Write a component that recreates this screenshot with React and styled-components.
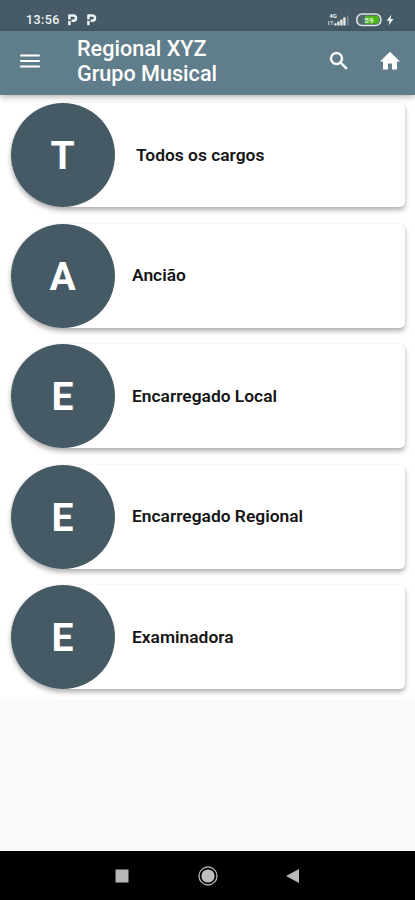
import React from 'react';
import styled, { createGlobalStyle } from 'styled-components';

const GlobalStyle = createGlobalStyle`
  * { box-sizing: border-box; }
  body { margin: 0; font-family: Roboto, sans-serif; background: #fafafa; }
`;

const Screen = styled.div`
  width: 415px;
  height: 900px;
  display: flex;
  flex-direction: column;
  overflow: hidden;
  background: #fafafa;
`;

const StatusBar = styled.div`
  height: 31px;
  flex: none;
  display: flex;
  align-items: center;
  padding: 8px 21px 0 26px;
  background: #465b65;
  color: #f0f5f7;
`;

const Clock = styled.span`
  width: 41px;
  font-size: 12.5px;
  line-height: 14px;
  font-weight: 500;
  letter-spacing: 0.4px;
`;

const StatusIcons = styled.div`
  display: flex;
  align-items: center;
  gap: ${(p) => p.$gap}px;
  margin-left: ${(p) => (p.$end ? 'auto' : 0)};
  svg { display: block; }
`;

const AppBar = styled.header`
  height: 64px;
  flex: none;
  display: flex;
  align-items: center;
  padding: 0 13px 4px 18px;
  background: #607d8b;
  color: #fff;
  position: relative;
  z-index: 1;
  box-shadow: 0 2px 6px rgba(0, 0, 0, 0.3);
`;

const IconButton = styled.button`
  width: 24px;
  height: 24px;
  padding: 0;
  border: 0;
  background: none;
  color: inherit;
  margin-left: ${(p) => p.$space || 0}px;
  svg { display: block; width: 24px; height: 24px; fill: currentColor; }
`;

const Title = styled.h1`
  margin: 0 auto 0 35px;
  font-size: 21.6px;
  line-height: 25.5px;
  font-weight: 500;
  white-space: nowrap;
`;

const List = styled.main`
  display: flex;
  flex-direction: column;
  gap: 16.5px;
  padding: 8px 10px 11px 11px;
  background: #fff;
`;

const Card = styled.article`
  height: 104px;
  flex: none;
  display: flex;
  align-items: center;
  border-radius: 52px 5px 5px 52px;
  background: #fff;
  box-shadow: 0 3px 5px rgba(0, 0, 0, 0.32), 0 0 2px rgba(0, 0, 0, 0.06);
`;

const Avatar = styled.div`
  width: 104px;
  height: 104px;
  flex: none;
  display: flex;
  align-items: center;
  justify-content: center;
  padding: 2px 1px 0 0;
  border-radius: 50%;
  background: #455a64;
  color: #fff;
  font-size: 39px;
  font-weight: 700;
`;

const Label = styled.span`
  margin-left: ${(p) => (p.$indent ? 21 : 17)}px;
  padding-bottom: 1px;
  color: #151515;
  font-size: 17.4px;
  line-height: 22px;
  font-weight: 600;
`;

const Spacer = styled.div`
  flex: 1;
`;

const NavBar = styled.nav`
  height: 49px;
  flex: none;
  display: flex;
  align-items: center;
  justify-content: space-between;
  padding: 0 114px 0 114px;
  background: #000;
  svg { display: block; }
`;

const roles = ['Todos os cargos', 'Ancião', 'Encarregado Local', 'Encarregado Regional', 'Examinadora'];

const Parking = () => (
  <svg width="11" height="13" viewBox="0 0 11 13" fill="none" stroke="#f0f5f7" strokeLinejoin="round">
    <path d="M2.4 12.2V8" strokeWidth="2.5" />
    <path d="M2.4 6.6V2.4H6.3a2.5 2.5 0 0 1 0 5.4H4.6" strokeWidth="2.5" />
  </svg>
);

const Signal = () => (
  <svg width="22" height="14" viewBox="0 0 22 14" fill="#e8eef0">
    <text x="1.2" y="5.2" fontFamily="Roboto, sans-serif" fontSize="6" fontWeight="700">4G</text>
    <path d="M0 8h1.4v4H0zM2.3 8h3v1.2H4.4V12H3.1V9.2h-.8z" opacity=".6" />
    <path d="M6.3 10.2h2.3v2.3H6.3zM9.3 8.4h2.3v4.1H9.3zM12.3 6.4h2.3v6.1h-2.3zM15.3 4.2h2.3v8.3h-2.3z" />
    <path d="M19 2.5h1.6v10H19z" opacity=".3" />
  </svg>
);

const Battery = () => (
  <svg width="27" height="14" viewBox="0 0 27 14">
    <rect x="1.8" y="1" width="24" height="11.5" rx="5.2" fill="#52666b" stroke="#dce4e5" strokeWidth="1.6" />
    <path d="M9.8 2.8H21a3 3 0 0 1 3 3v2a3 3 0 0 1-3 3H9.8z" fill="#4cb51d" />
    <text x="9.3" y="9.8" fontFamily="Roboto, sans-serif" fontSize="8" fontWeight="700" fill="#dff0d4">59</text>
  </svg>
);

export default function App() {
  return (
    <Screen>
      <GlobalStyle />
      <StatusBar>
        <Clock>13:56</Clock>
        <StatusIcons $gap={8}><Parking /><Parking /></StatusIcons>
        <StatusIcons $gap={4.5} $end>
          <Signal />
          <Battery />
          <svg width="8" height="12" viewBox="0 0 8 12" fill="#f2f6f7"><path d="M5.4.8.6 6.7h2.8L2.6 11.2 7.5 5H4.6z" /></svg>
        </StatusIcons>
      </StatusBar>
      <AppBar>
        <IconButton aria-label="Menu">
          <svg viewBox="0 0 24 24"><path d="M2.2 5.6h19.6v2H2.2zm0 5.4h19.6v2H2.2zm0 5.4h19.6v2H2.2z" /></svg>
        </IconButton>
        <Title>Regional XYZ<br />Grupo Musical</Title>
        <IconButton aria-label="Buscar">
          <svg viewBox="0 0 24 24" stroke="currentColor" strokeWidth="0.4"><path d="M15.5 14h-.79l-.28-.27A6.471 6.471 0 0 0 16 9.5 6.5 6.5 0 1 0 9.5 16c1.61 0 3.09-.59 4.23-1.57l.27.28v.79l5 4.99L20.49 19l-4.99-5zm-6 0C7.01 14 5 11.99 5 9.5S7.01 5 9.5 5 14 7.01 14 9.5 11.99 14 9.5 14z" /></svg>
        </IconButton>
        <IconButton aria-label="Início" $space={27}>
          <svg viewBox="0 0 24 24"><path d="M10 20.5v-6h4v6h5v-8h3L12 2.8 2 12.5h3v8z" /></svg>
        </IconButton>
      </AppBar>
      <List>
        {roles.map((role, i) => (
          <Card key={role}>
            <Avatar>{role[0]}</Avatar>
            <Label $indent={i === 0}>{role}</Label>
          </Card>
        ))}
      </List>
      <Spacer />
      <NavBar>
        <svg width="16" height="16" viewBox="0 0 16 16"><path d="M1.5 1.5h13v13h-13z" fill="#b9b9b9" /></svg>
        <svg width="22" height="22" viewBox="0 0 22 22"><circle cx="11" cy="11" r="9" fill="none" stroke="#b5b5b5" strokeWidth="1.3" /><circle cx="11" cy="11" r="6.6" fill="#bdbdbd" /></svg>
        <svg width="16" height="16" viewBox="0 0 16 16"><path d="M14 1v14L1 8z" fill="#b9b9b9" /></svg>
      </NavBar>
    </Screen>
  );
}
